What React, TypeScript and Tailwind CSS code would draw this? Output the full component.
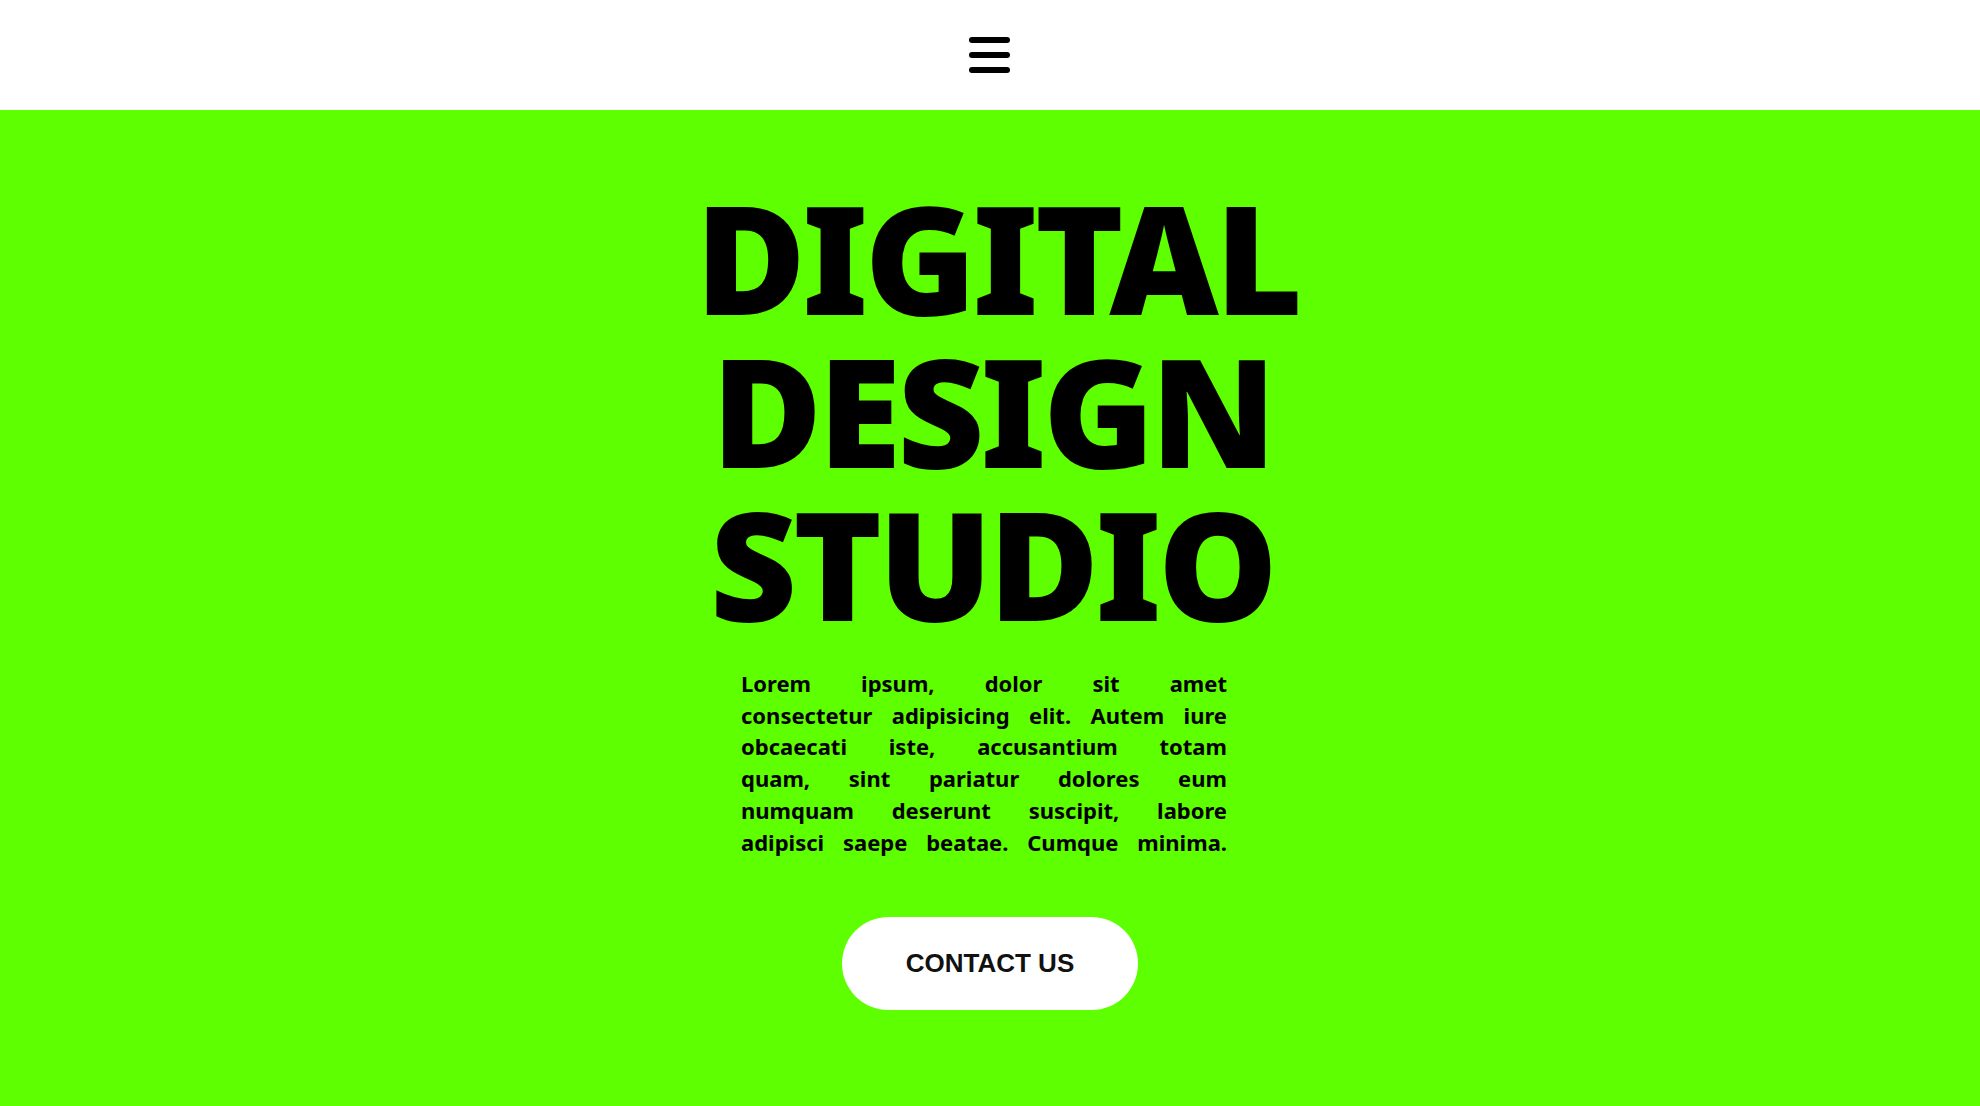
function MenuIcon() {
  return (
    <svg width="48" height="42" viewBox="0 0 48 42" fill="none" aria-hidden>
      <line x1="6" y1="6" x2="41" y2="6" stroke="#000" strokeWidth="6" strokeLinecap="round" />
      <line x1="6" y1="21" x2="41" y2="21" stroke="#000" strokeWidth="6" strokeLinecap="round" />
      <line x1="6" y1="36" x2="41" y2="36" stroke="#000" strokeWidth="6" strokeLinecap="round" />
    </svg>
  )
}

const lines = [
  'Lorem ipsum, dolor sit amet',
  'consectetur adipisicing elit. Autem iure',
  'obcaecati iste, accusantium totam',
  'quam, sint pariatur dolores eum',
  'numquam deserunt suscipit, labore',
  'adipisci saepe beatae. Cumque minima.',
]

export default function App() {
  return (
    <div className="min-h-screen flex flex-col bg-[#5eff00]">
      <header className="h-[110px] bg-white flex items-center justify-center">
        <button className="flex items-center justify-center">
          <MenuIcon />
        </button>
      </header>

      <main className="flex-1 flex flex-col items-center pt-[70px] pb-[96px]">
        <h1 className="text-center font-['Noto_Sans',sans-serif] font-black text-black text-[151px] leading-[153px] tracking-[-4px] pl-[4px]">
          <span className="block pl-[10px]">DIGITAL</span>
          <span className="block">DESIGN</span>
          <span className="block">STUDIO</span>
        </h1>

        <p className="mt-[29px] w-[486px] -translate-x-[6px] font-['Noto_Sans',sans-serif] font-bold text-[22px] leading-[31.7px] text-black">
          {lines.map((l) => (
            <span key={l} className="block text-justify [text-align-last:justify]">
              {l}
            </span>
          ))}
        </p>

        <a
          href="#"
          className="mt-[59px] w-[296px] h-[93px] rounded-full bg-white flex items-center justify-center font-['Liberation_Sans',Arial,sans-serif] font-bold text-[26px] text-[#111]"
        >
          CONTACT US
        </a>
      </main>
    </div>
  )
}
